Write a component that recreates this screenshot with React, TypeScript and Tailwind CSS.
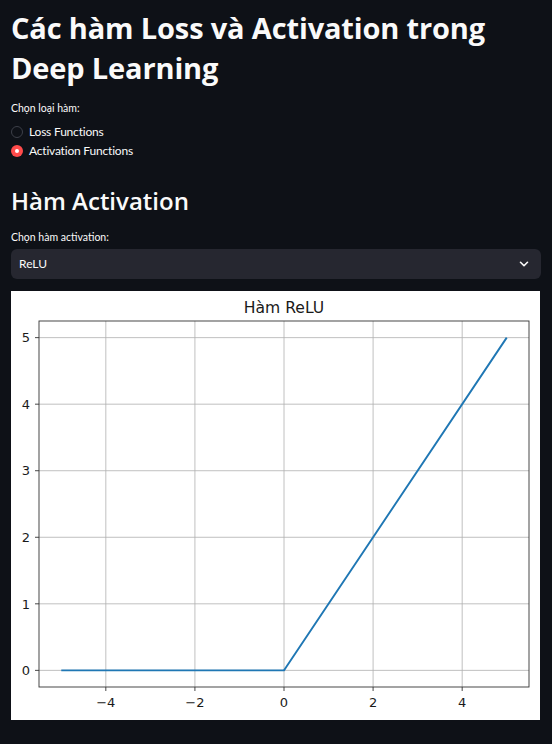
import { ChevronDown } from "lucide-react";

const W = 529;
const H = 429;
const AX = { left: 28, right: 518, top: 30, bottom: 396 };
const xs = (v: number) => 273 + v * 44.545;
const ys = (v: number) => 379.36 - v * 66.545;

function ReluChart() {
  const xTicks = [-4, -2, 0, 2, 4];
  const yTicks = [0, 1, 2, 3, 4, 5];
  const font = "'DejaVu Sans', sans-serif";
  return (
    <svg width={W} height={H} viewBox={`0 0 ${W} ${H}`} className="block">
      <rect width={W} height={H} fill="#ffffff" />
      {/* grid */}
      {xTicks.map((t) => (
        <line key={`gx${t}`} x1={xs(t)} x2={xs(t)} y1={AX.top} y2={AX.bottom} stroke="#b0b0b0" strokeWidth={0.8} />
      ))}
      {yTicks.map((t) => (
        <line key={`gy${t}`} x1={AX.left} x2={AX.right} y1={ys(t)} y2={ys(t)} stroke="#b0b0b0" strokeWidth={0.8} />
      ))}
      {/* relu */}
      <polyline
        points={`${xs(-5)},${ys(0)} ${xs(0)},${ys(0)} ${xs(0.05)},${ys(0.05)} ${xs(5)},${ys(5)}`}
        fill="none"
        stroke="#1f77b4"
        strokeWidth={1.9}
        strokeLinejoin="round"
      />
      {/* spines */}
      <rect
        x={AX.left}
        y={AX.top}
        width={AX.right - AX.left}
        height={AX.bottom - AX.top}
        fill="none"
        stroke="#333"
        strokeWidth={0.9}
      />
      {xTicks.map((t) => (
        <g key={`tx${t}`}>
          <line x1={xs(t)} x2={xs(t)} y1={AX.bottom} y2={AX.bottom + 4} stroke="#333" strokeWidth={0.9} />
          <text x={xs(t)} y={416} fontFamily={font} fontSize={13} fill="#1a1a1a" textAnchor="middle">
            {t < 0 ? `\u2212${Math.abs(t)}` : t}
          </text>
        </g>
      ))}
      {yTicks.map((t) => (
        <g key={`ty${t}`}>
          <line x1={AX.left - 4} x2={AX.left} y1={ys(t)} y2={ys(t)} stroke="#333" strokeWidth={0.9} />
          <text x={19} y={ys(t) + 4.7} fontFamily={font} fontSize={13} fill="#1a1a1a" textAnchor="end">
            {t}
          </text>
        </g>
      ))}
      <text x={273} y={22} fontFamily={font} fontSize={15.6} fill="#1a1a1a" textAnchor="middle">
        Hàm ReLU
      </text>
    </svg>
  );
}

function Radio(props: { label: string; checked?: boolean }) {
  return (
    <div className="flex h-[19px] items-center gap-[6px]">
      {props.checked ? (
        <span className="flex h-3 w-3 items-center justify-center rounded-full bg-[#ff4b4b]">
          <span className="h-[4px] w-[4px] rounded-full bg-white" />
        </span>
      ) : (
        <span className="h-3 w-3 rounded-full border border-[#3d4049] bg-[#0e1117]" />
      )}
      <span className="text-[12px] tracking-[-0.2px] text-[#fafafa]">{props.label}</span>
    </div>
  );
}

export default function App() {
  return (
    <div
      className="min-h-screen bg-[#0e1117] px-[11px] pt-2 text-[#fafafa]"
      style={{ fontFamily: "Lato, 'Noto Sans', sans-serif" }}
    >
      <h1 className="max-w-[500px] font-['Open_Sans',sans-serif] text-[29px] font-bold leading-[40px] tracking-[-0.15px]">
        Các hàm Loss và Activation trong Deep Learning
      </h1>

      <div className="mt-3 text-[10.5px] leading-4">Chọn loại hàm:</div>
      <div className="mt-[6px] flex flex-col">
        <Radio label="Loss Functions" />
        <Radio label="Activation Functions" checked />
      </div>

      <h2 className="mt-[26px] font-['Open_Sans',sans-serif] text-[24px] font-semibold leading-[30px]">
        Hàm Activation
      </h2>

      <div className="mt-[13px] text-[10.5px] leading-4">Chọn hàm activation:</div>
      <div className="mt-1 flex h-[30px] items-center justify-between rounded-[6px] bg-[#262730] pl-2 pr-[10px]">
        <span className="text-[12px]">ReLU</span>
        <ChevronDown size={14} strokeWidth={2.8} />
      </div>

      <div className="mt-3 w-[529px]">
        <ReluChart />
      </div>
    </div>
  );
}
